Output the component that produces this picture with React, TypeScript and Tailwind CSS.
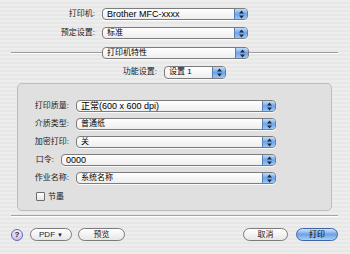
import React from "react";

// Tiger-era print dialog, drawn at 350x254.

const font = "font-['Liberation_Sans','Noto_Sans_CJK_SC',sans-serif]";

function Arrows() {
  return (
    <svg width="7" height="9" viewBox="0 0 7 9">
      <path d="M3.5 0.5 L6 3.5 L1 3.5 Z" fill="#1a2a44" />
      <path d="M3.5 8.5 L6 5.5 L1 5.5 Z" fill="#1a2a44" />
    </svg>
  );
}

function Popup({
  text,
  className = "",
  latin = false,
}: {
  text: string;
  className?: string;
  latin?: boolean;
}) {
  return (
    <div
      className={`flex h-[12px] items-stretch overflow-hidden rounded-[4px] border border-[#7c7c7c] bg-gradient-to-b from-white to-[#eeeeee] shadow-[0_1px_0_rgba(255,255,255,0.8)] ${className}`}
    >
      <div
        className={`flex flex-1 items-center pl-[4px] leading-none text-black ${
          latin ? "text-[9px]" : "text-[8px]"
        }`}
      >
        {text}
      </div>
      <div className="flex w-[13px] items-center justify-center border-l border-[#5a7fb8] bg-gradient-to-b from-[#c4dcf7] via-[#6ea4e6] to-[#9cc6f4]">
        <Arrows />
      </div>
    </div>
  );
}

function Row({
  label,
  labelWidth,
  text,
  popupClass,
  latin = false,
}: {
  label: string;
  labelWidth: string;
  text: string;
  popupClass: string;
  latin?: boolean;
}) {
  return (
    <div className="flex h-[12px] items-center">
      <div className={`${labelWidth} pr-[7px] text-right text-[8px] leading-none text-[#1a1a1a]`}>
        {label}
      </div>
      <Popup text={text} className={popupClass} latin={latin} />
    </div>
  );
}

function PillButton({
  children,
  className = "",
  primary = false,
}: {
  children: React.ReactNode;
  className?: string;
  primary?: boolean;
}) {
  return (
    <div
      className={`flex h-[13px] items-center justify-center rounded-full border text-[8px] leading-none ${
        primary
          ? "border-[#3e64a4] bg-gradient-to-b from-[#cfe3fa] via-[#6da3e6] to-[#a9cff6] text-black"
          : "border-[#7a7a7a] bg-gradient-to-b from-white to-[#e6e6e6] text-[#222]"
      } ${className}`}
    >
      {children}
    </div>
  );
}

export default function App() {
  return (
    <div
      className={`h-[254px] w-[350px] overflow-hidden bg-[repeating-linear-gradient(0deg,#ededed_0px,#ededed_2px,#e7e7e7_2px,#e7e7e7_4px)] ${font}`}
    >
      <div className="pt-[8px]">
        <Row label="打印机:" labelWidth="w-[102px]" text="Brother MFC-xxxx" popupClass="w-[146px]" latin />
        <div className="mt-[7px]">
          <Row label="预定设置:" labelWidth="w-[102px]" text="标准" popupClass="w-[146px]" />
        </div>

        <div className="mt-[8px] flex h-[12px] items-center">
          <div className="ml-[11px] h-[2px] w-[91px] border-t border-b border-t-[#9c9c9c] border-b-white" />
          <Popup text="打印机特性" className="w-[147px]" />
          <div className="h-[2px] w-[89px] border-t border-b border-t-[#9c9c9c] border-b-white" />
        </div>

        <div className="mt-[7px]">
          <Row label="功能设置:" labelWidth="w-[164px]" text="设置 1" popupClass="w-[62px] h-[13px]" />
        </div>

        <div className="ml-[17px] mt-[5px] h-[128px] w-[315px] rounded-[5px] border border-[#bdbdbd] bg-[#e0e0e0] pt-[16px]">
          <div className="flex flex-col gap-[6px]">
            <Row label="打印质量:" labelWidth="w-[58px]" text="正常(600 x 600 dpi)" popupClass="w-[200px]" latin />
            <Row label="介质类型:" labelWidth="w-[58px]" text="普通纸" popupClass="w-[200px]" />
            <Row label="加密打印:" labelWidth="w-[58px]" text="关" popupClass="w-[200px]" />
            <Row label="口令:" labelWidth="w-[43px]" text="0000" popupClass="w-[215px]" latin />
            <Row label="作业名称:" labelWidth="w-[58px]" text="系统名称" popupClass="w-[200px]" />
          </div>
          <div className="ml-[18px] mt-[8px] flex items-center gap-[3px]">
            <div className="h-[9px] w-[9px] rounded-[1px] border border-[#6c6c6c] bg-gradient-to-b from-white to-[#e4e4e4]" />
            <span className="text-[8px] leading-none text-[#1a1a1a]">节墨</span>
          </div>
        </div>

        <div className="ml-[11px] mt-[4px] h-[2px] w-[327px] border-t border-b border-t-[#a4a4a4] border-b-white" />

        <div className="mt-[11px] flex items-center">
          <div className="ml-[11px] flex h-[12px] w-[12px] items-center justify-center rounded-full border border-[#6f62a6] bg-gradient-to-b from-[#f2eefe] to-[#c7bdf0] text-[8px] font-bold leading-none text-[#222]">
            ?
          </div>
          <PillButton className="ml-[7px] w-[42px]">
            PDF <span className="ml-[2px] text-[6px]">▼</span>
          </PillButton>
          <PillButton className="ml-[6px] w-[47px]">预览</PillButton>
          <PillButton className="ml-[118px] w-[45px]">取消</PillButton>
          <PillButton primary className="ml-[8px] w-[42px]">
            打印
          </PillButton>
        </div>
      </div>
    </div>
  );
}
